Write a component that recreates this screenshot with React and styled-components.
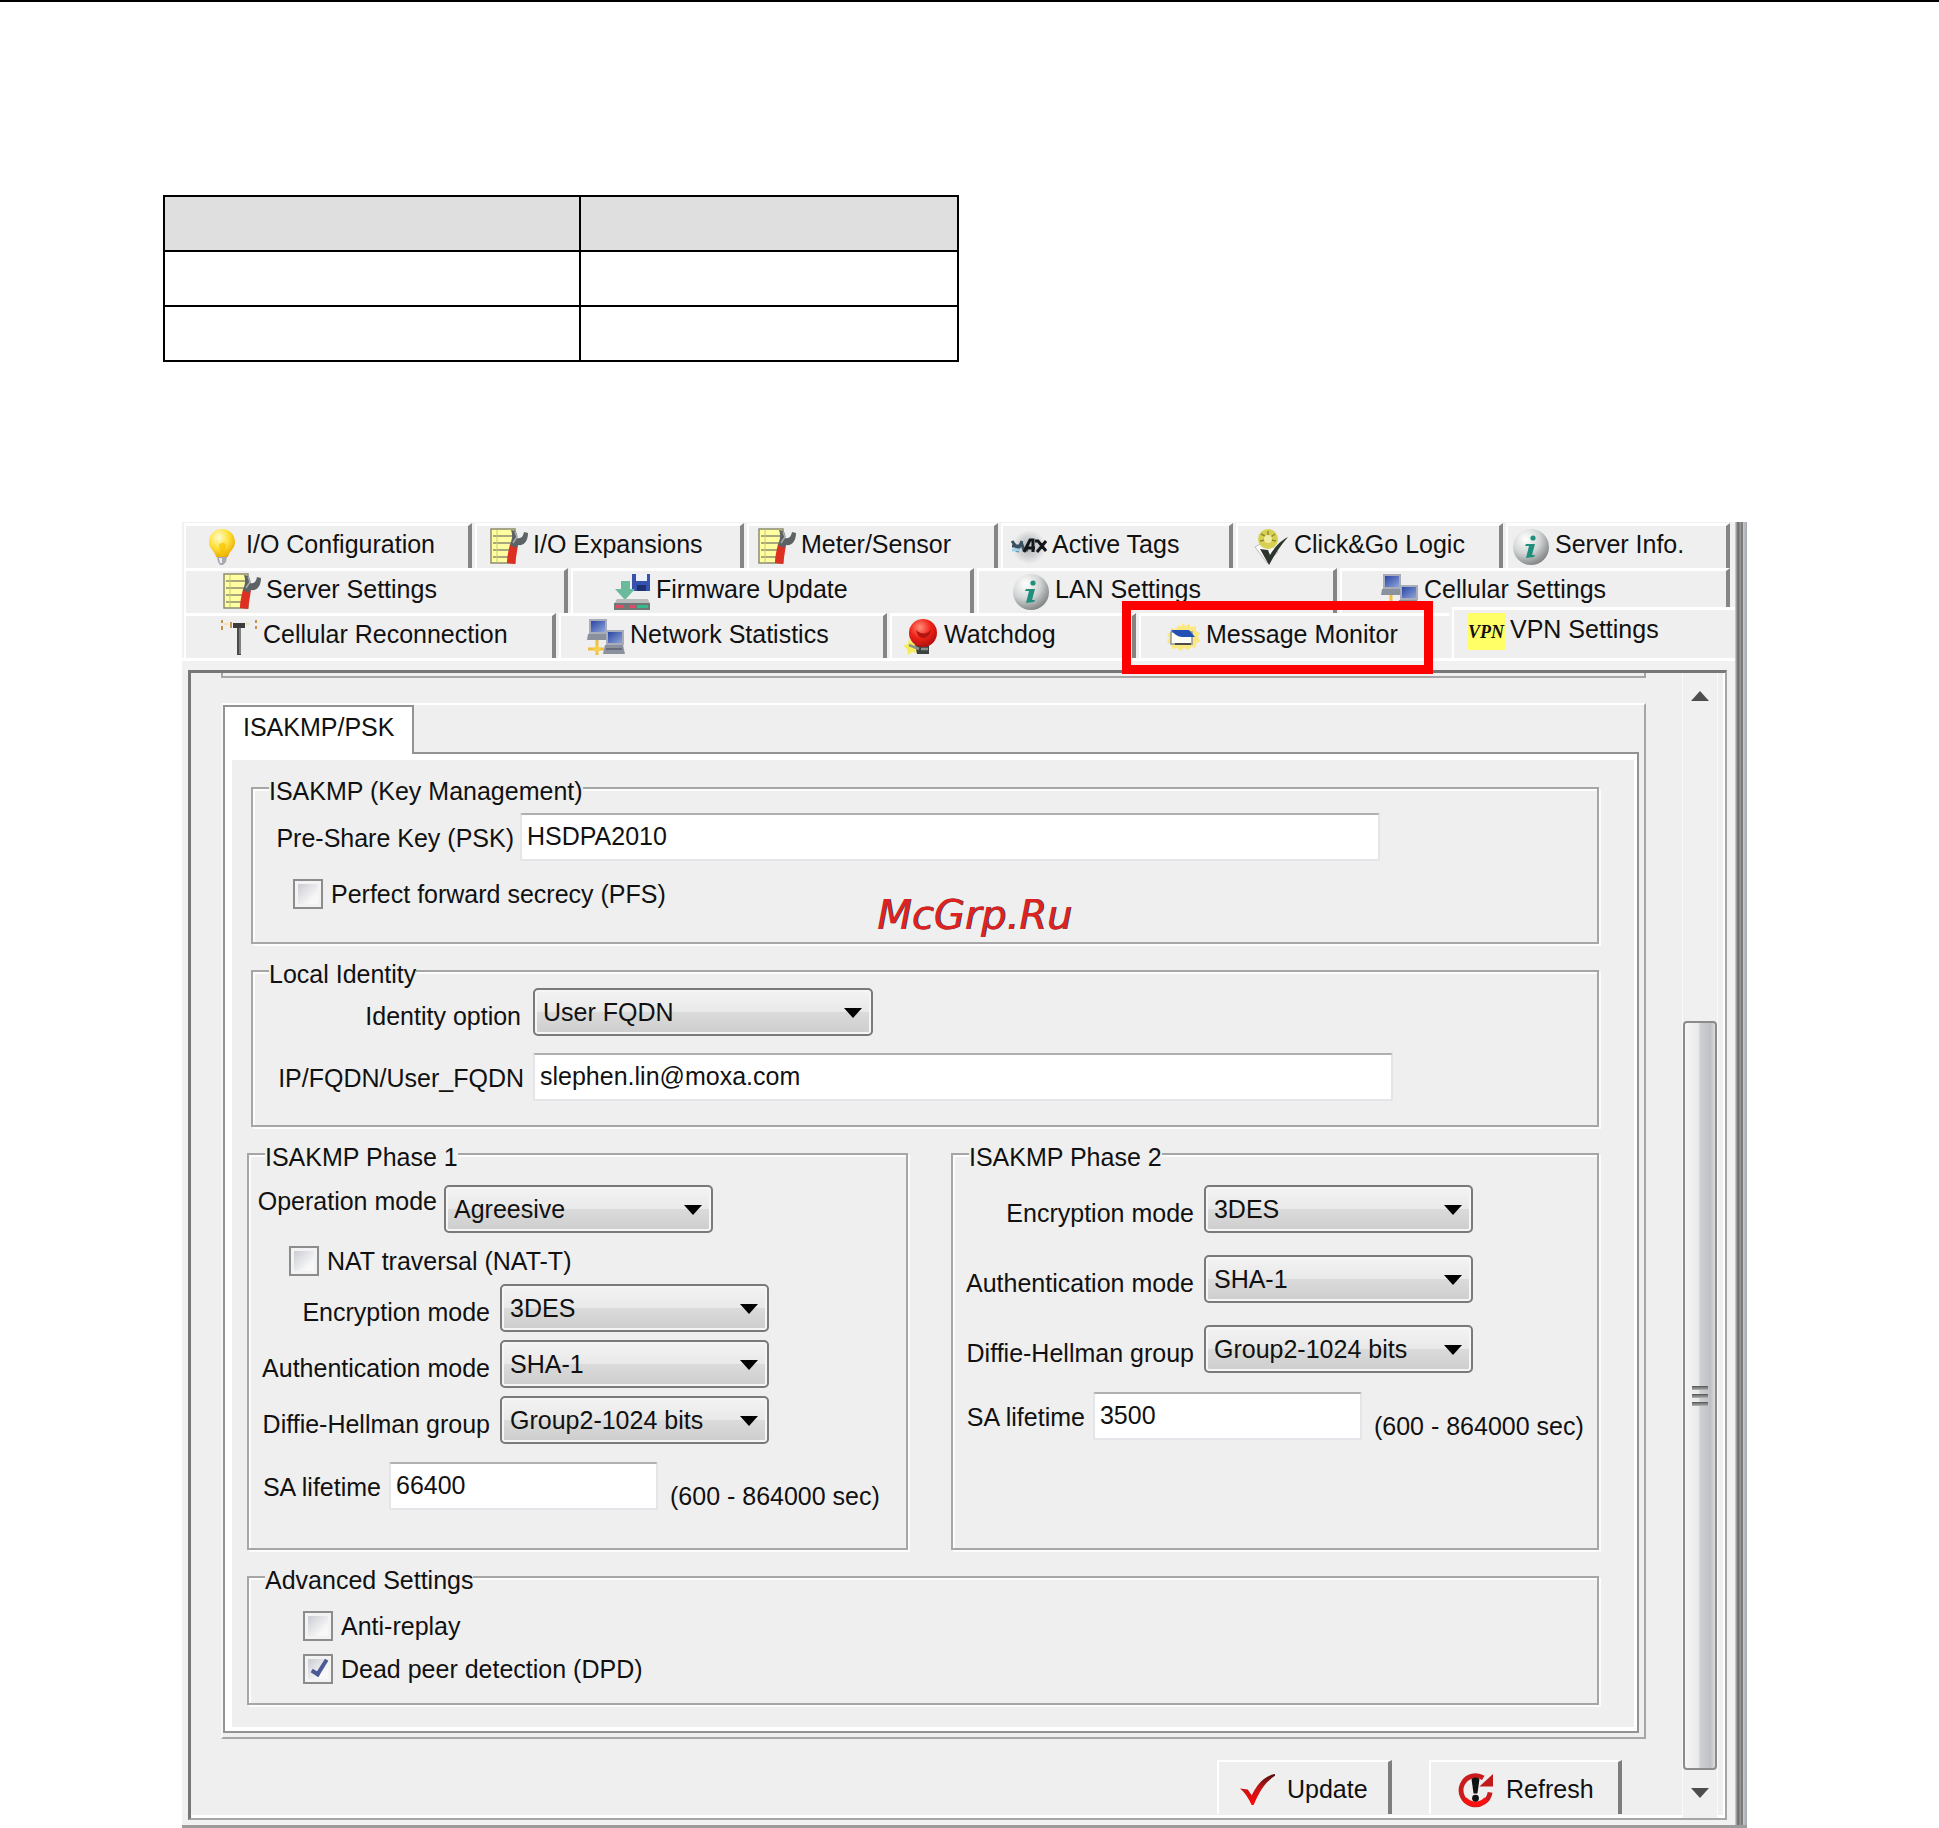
import React, { useId, useState } from 'react';
import styled, { createGlobalStyle, css } from 'styled-components';

const FACE = '#efefef';
const LINE = '#a6a6a6';

const GlobalStyle = createGlobalStyle`
  *, *::before, *::after { box-sizing: border-box; }
  body { margin: 0; background: #fff; }
  body, button, input, select {
    font-family: "Liberation Sans", Arial, sans-serif;
    font-size: 25px;
    line-height: 28px;
    color: #111;
  }
`;

const Page = styled.div`
  position: relative;
  border-top: 2px solid #000;
  padding: 193px 192px 0 182px;
`;

const BlankTable = styled.table`
  width: 796px;
  max-width: 100%;
  margin: 0 0 160px -19px;
  border-collapse: collapse;
  table-layout: fixed;
  th, td { height: 55px; padding: 0; border: 2px solid #000; }
  th { background: #dfdfdf; }
  th:first-child { width: 416px; }
`;

/* ---------- window ---------- */

const Window = styled.main`
  display: flex;
  background: #f1f1f1;
  border-bottom: 3px solid #9c9c9c;
`;

const WindowBody = styled.div`
  flex: 1;
  min-width: 0;
  padding: 1px 0 5px;
`;

const WindowEdge = styled.div`
  width: 12px;
  background: linear-gradient(to right, #d8d8d8, #666 25%, #9a9a9a 45%, #666 60%, #c4c8cc 70%, #a4a8ac);
`;

const TabStrip = styled.div`
  border-bottom: 3px solid #fff;
`;

const TabRow = styled.div`
  display: grid;
  grid-template-columns: ${p => p.$spans.map(n => `minmax(0, ${n}fr)`).join(' ')};
  gap: 3px;
  padding: 0 ${p => (p.$flush ? 0 : 5)}px 0 2px;
`;

const TabButton = styled.button`
  position: relative;
  min-width: 0;
  height: 45px;
  display: flex;
  align-items: center;
  gap: 5px;
  padding: 0 0 0 ${p => p.$indent}px;
  background: ${FACE};
  border: 0 solid #fff;
  border-width: 3px 0 0 2px;
  border-right: ${p => (p.$edge ? '4px solid #858585' : '0')};
  white-space: nowrap;
  ${p => p.$selected && css`
    height: 51px;
    margin-top: -6px;
    padding-bottom: 5px;
  `}
`;

const TabText = styled.span`
  padding-bottom: 6px;
`;

const Highlight = styled.span`
  position: absolute;
  z-index: 2;
  inset: -15px 16px -16px -19px;
  border: 9px solid #f00;
  pointer-events: none;
`;

/* ---------- panel ---------- */

const Panel = styled.section`
  display: flex;
  margin: 9px 8px 0 6px;
  background: ${FACE};
  border: 2px solid ${LINE};
  border-top: 3px solid #777;
  border-left: 3px solid #777;
  box-shadow: inset -2px -3px 0 #fff;
`;

const PanelContent = styled.div`
  flex: 1;
  min-width: 0;
  padding: 0 36px 4px 30px;
`;

const GroupTail = styled.div`
  height: 5px;
  margin-bottom: 25px;
  border: 2px solid ${LINE};
  border-top: 0;
`;

const TabControl = styled.div`
  padding: 0 5px 4px 0;
  border: 2px solid ${LINE};
  border-top-color: #fff;
  border-left-color: #f6f6f6;
`;

const InnerTab = styled.button`
  display: block;
  position: relative;
  height: 49px;
  margin-bottom: -2px;
  padding: 0 18px 7px 18px;
  background: #fff;
  border: 2px solid #939393;
  border-bottom: 0;
`;

const Pane = styled.div`
  padding: 6px 3px 4px 7px;
  background: #fff;
  border: 2px solid #939393;
`;

const PaneBody = styled.div`
  display: flex;
  flex-direction: column;
  gap: 10px;
  padding: 11px 35px 22px 15px;
  background: ${FACE};
`;

const Columns = styled.div`
  display: flex;
  gap: 43px;
`;

const Group = styled.fieldset`
  flex: ${p => p.$span || 'none'};
  min-width: 0;
  margin: 0 0 0 ${p => p.$inset || 0}px;
  padding: ${p => p.$pad};
  border: 2px solid ${LINE};
  box-shadow: inset 2px 2px 0 #fcfcfc, 2px 2px 0 #fcfcfc;
`;

const Legend = styled.legend`
  margin-left: 16px;
  padding: 6px 0 0;
  background: ${FACE};
`;

const Stack = styled.div`
  display: flex;
  flex-direction: column;
  gap: ${p => p.$gap}px;
  margin-bottom: ${p => p.$after || 0}px;
`;

const Row = styled.div`
  display: flex;
  align-items: ${p => (p.$raised ? 'flex-start' : 'center')};
  gap: ${p => p.$gap || 8}px;
`;

const Label = styled.label`
  flex: none;
  width: ${p => p.$width}px;
  padding-top: ${p => (p.$drop ? 8 : 2)}px;
  text-align: right;
  white-space: nowrap;
`;

const TextBox = styled.input`
  flex: 0 1 ${p => p.$width}px;
  min-width: 0;
  height: 48px;
  padding: 0 5px 1px;
  background: #fff;
  border: 2px solid #e4e5e9;
  border-top-color: #b0b0b0;
  border-radius: 2px;
  outline: 0;
`;

const Hint = styled.span`
  padding: 20px 0 0 4px;
  white-space: nowrap;
`;

const SelectFrame = styled.span`
  position: relative;
  flex: 0 1 ${p => p.$width}px;
  min-width: 0;
  &::after {
    content: '';
    position: absolute;
    right: 11px;
    top: 20px;
    border: 9px solid transparent;
    border-top: 10px solid #000;
    border-bottom: 0;
    pointer-events: none;
  }
`;

const SelectBox = styled.select`
  display: block;
  width: 100%;
  height: 48px;
  padding: 0 30px 0 8px;
  appearance: none;
  background: linear-gradient(#f3f3f3, #e9e9e9 50%, #dbdbdb 50%, #cdcdcd);
  border: 2px solid #7a7a7a;
  border-radius: 5px;
  box-shadow: inset 0 0 0 2px #f6f6f6;
  outline: 0;
`;

const CheckLabel = styled.label`
  display: flex;
  align-items: center;
  gap: 8px;
  height: 30px;
  padding-left: ${p => p.$indent}px;
`;

const CheckBox = styled.input`
  appearance: none;
  flex: none;
  width: 30px;
  height: 30px;
  margin: 0;
  display: grid;
  place-items: center;
  border: 2px solid #8c8c8c;
  background: linear-gradient(135deg, #c9ccd2, #f8f8f8 75%) content-box, #f3f3f3;
  padding: 3px;
  &:checked::after {
    content: '';
    width: 9px;
    height: 19px;
    margin: -6px 0 0 3px;
    border: solid #4a5a96;
    border-width: 0 4px 4px 0;
    transform: rotate(32deg);
  }
`;

const Actions = styled.div`
  display: flex;
  justify-content: flex-end;
  gap: 37px;
  padding: 21px 24px 0 0;
`;

const ActionButton = styled.button`
  display: flex;
  align-items: center;
  gap: ${p => p.$gap}px;
  width: ${p => p.$width}px;
  height: 54px;
  padding: 2px 0 0 ${p => p.$indent}px;
  background: ${FACE};
  border: 2px solid #fff;
  border-bottom: 0;
  border-right: 4px solid #7e7e7e;
`;

/* ---------- scroll bar ---------- */

const ScrollTrack = styled.div`
  width: 36px;
  margin-right: 7px;
  display: flex;
  flex-direction: column;
  align-items: center;
  padding-bottom: 3px;
  background: #f0f0f0;
  border-left: 1px solid #fafafa;
  border-right: 1px solid #fafafa;
`;

const ScrollArrow = styled.button`
  flex: none;
  display: grid;
  place-items: center;
  width: 100%;
  height: 45px;
  padding: 0;
  border: 0;
  background: none;
`;

const ScrollSpace = styled.div`
  flex: 304 0 0;
`;

const ScrollThumb = styled.div`
  flex: 746 0 0;
  width: 34px;
  display: flex;
  flex-direction: column;
  align-items: center;
  justify-content: center;
  gap: 4px;
  background: linear-gradient(to right, #f6f6f6, #e9e9ea 45%, #cfd0d3 50%, #bfc0c4 85%, #dcdcde);
  border: 2px solid #8b8b8b;
  border-radius: 4px;
`;

const GripLine = styled.span`
  width: 16px;
  height: 4px;
  background: linear-gradient(#555, #b4b4b4);
`;

const Watermark = styled.div`
  position: absolute;
  inset: 0 0 0 10px;
  display: flex;
  align-items: center;
  justify-content: center;
  font: italic 40px/48px "DejaVu Sans", Verdana, sans-serif;
  color: #dd2222;
  text-shadow: 1px 0 0 #3a2a3a;
  pointer-events: none;
`;

/* ---------- icons ---------- */

const Glyph = styled.svg`
  flex: none;
  display: block;
`;

const VpnMark = styled.span`
  flex: none;
  display: grid;
  place-items: center;
  width: 38px;
  height: 37px;
  overflow: hidden;
  background: #ffff66;
  font: italic bold 18px/20px "Liberation Serif", serif;
`;

const Icon = ({ children, size = 38 }) => (
  <Glyph width={size} height={size} viewBox="0 0 38 38" aria-hidden="true">{children}</Glyph>
);

const Bulb = () => (
  <Icon>
    <defs>
      <radialGradient id="bulb" cx=".38" cy=".3" r=".75">
        <stop offset="0" stopColor="#fffbd0" /><stop offset=".5" stopColor="#ffe23c" /><stop offset="1" stopColor="#e8a800" />
      </radialGradient>
    </defs>
    <path d="M19 1C11 1 6 7 6 14c0 7 6 9 7 15h12c1-6 7-8 7-15C32 7 27 1 19 1z" fill="url(#bulb)" />
    <path d="M16 17c2-3 5-3 7 0l-2 11h-3z" fill="#f4c400" opacity=".7" />
    <path d="M14 29h10l-1 5-3 3h-3l-2-3z" fill="#a9a9b4" />
    <path d="M16 30h3v5h-2z" fill="#eee" />
  </Icon>
);

const Sheet = () => (
  <Icon>
    <path d="M1 1h24v34H1z" fill="#ffffa0" stroke="#8c8c70" strokeWidth="1.5" />
    <path d="M3 8h20M3 15h20M3 22h20M3 29h20" stroke="#8c8c70" strokeWidth="1.5" />
    <path d="M7 2v32" stroke="#c8c878" />
    <path d="M20 16l8 1-3 19-8-1c0-6 1-10 3-19z" fill="#dd2f22" />
    <path d="M21 2c5 0 7 4 6 8 4 1 6-1 7-6l4 1c0 8-4 13-10 12l-2 3-6-3c2-6 3-9 1-15z" fill="#5d6264" />
    <path d="M25 4l2 5-4 6" fill="none" stroke="#a5abab" strokeWidth="1.5" />
  </Icon>
);

const Tags = () => (
  <Icon>
    <defs>
      <radialGradient id="tagball">
        <stop offset="0" stopColor="#b4b8bb" /><stop offset=".6" stopColor="#d0d2d4" /><stop offset="1" stopColor="#efefef" />
      </radialGradient>
    </defs>
    <circle cx="20" cy="19" r="17" fill="url(#tagball)" />
    <path d="M3 13l5 7M3 18h8M8 24l5-11M12 14l3 8h4" fill="none" stroke="#395160" strokeWidth="3" />
    <path d="M15 24l6-12h3v12M18 20h8M26 13h3l8 10M37 13l-9 11" fill="none" stroke="#15181a" strokeWidth="3" />
    <path d="M3 22h8" stroke="#9fd4ec" strokeWidth="3" />
  </Icon>
);

const ClickGo = () => (
  <Icon>
    <path d="M4 19l12-7 11 12-11 11z" fill="#fafafa" stroke="#bdbdbd" />
    <circle cx="17" cy="11" r="10" fill="#d7d050" />
    <path d="M10 6l4 2M17 3v4M24 6l-4 3M9 13l5-1M25 13l-5-1" stroke="#8d8a34" strokeWidth="1.5" />
    <circle cx="17" cy="11" r="4" fill="#f1eda0" />
    <path d="M9 21l8 1 2 5C24 19 29 13 37 9 30 17 24 26 18 37z" fill="#2c352c" />
  </Icon>
);

const Info = () => (
  <Icon>
    <defs>
      <radialGradient id="infoball" cx=".35" cy=".28" r=".8">
        <stop offset="0" stopColor="#fff" /><stop offset=".5" stopColor="#d3d6d6" /><stop offset="1" stopColor="#74797a" />
      </radialGradient>
    </defs>
    <circle cx="19" cy="19" r="18" fill="url(#infoball)" />
    <circle cx="21" cy="10" r="2.6" fill="#1f8f7c" />
    <path d="M14 16h9l-3 11h3l-1 2-8 1 3-12h-4z" fill="#1f8f7c" />
  </Icon>
);

const Firmware = () => (
  <Icon>
    <path d="M19 1h18v17H21l-2-2z" fill="#3553ae" />
    <path d="M23 1h11v7H23z" fill="#eef1fb" />
    <path d="M24 12h9v6h-9z" fill="#1d3170" />
    <path d="M8 8h9v8h5L12 27 2 16h6z" fill="#6abb9c" />
    <path d="M4 26h31l2 5H1z" fill="#b9bcbc" />
    <path d="M1 30h36v7H1z" fill="#6f7777" />
    <path d="M3 32h8v3H3zM17 32h5v3h-5z" fill="#de4b64" />
    <path d="M24 32h11v3H24z" fill="#35b98c" />
  </Icon>
);

const Computers = () => (
  <Icon>
    <defs>
      <linearGradient id="screen" x1="0" y1="0" x2="1" y2="1">
        <stop offset="0" stopColor="#2a46a4" /><stop offset="1" stopColor="#8ea4d8" />
      </linearGradient>
    </defs>
    <path d="M10 20v17M1 31h16" stroke="#f0bf40" strokeWidth="3" />
    <path d="M6 31l4-4 4 4-4 4z" fill="#f6d04a" />
    <path d="M2 1h18v15H2z" fill="#a9adba" />
    <path d="M4 3h14v11H4z" fill="url(#screen)" />
    <path d="M1 16h18l2 6H0z" fill="#8c919e" />
    <path d="M19 12h18v15H19z" fill="#a9adba" />
    <path d="M21 14h14v11H21z" fill="url(#screen)" />
    <path d="M18 27h18l2 9H16z" fill="#8c919e" />
    <path d="M19 31h16" stroke="#666c7c" strokeWidth="2" />
  </Icon>
);

const Antenna = () => (
  <Icon>
    <path d="M19 6v31" stroke="#4a4a4a" strokeWidth="4" />
    <path d="M20 9v27" stroke="#b5b5b5" />
    <path d="M13 5h12v5H13z" fill="#3c3c3c" />
    <path d="M2 2v3M2 8v4M11 4v6" stroke="#c4924c" strokeWidth="2" />
    <path d="M3 6h6M26 6h4" stroke="#f5e3b8" strokeWidth="2" />
    <path d="M36 2v3M36 8v3" stroke="#c4924c" strokeWidth="2" />
  </Icon>
);

const Alarm = () => (
  <Icon>
    <defs>
      <radialGradient id="alarm" cx=".4" cy=".3" r=".75">
        <stop offset="0" stopColor="#ff8e7a" /><stop offset=".5" stopColor="#f02218" /><stop offset="1" stopColor="#a80f0c" />
      </radialGradient>
    </defs>
    <path d="M8 20l3 5 6-1-3 5 3 6-6-1-4 3-1-6-4-3 5-2z" fill="#f7ec5c" />
    <path d="M14 26h14v10H16z" fill="#3d4240" />
    <path d="M8 27l10 4M20 31h7" stroke="#8d938a" strokeWidth="2.5" />
    <circle cx="22" cy="15" r="14" fill="url(#alarm)" />
    <path d="M15 12c4 4 10 5 15 0-1 6-5 8-8 8s-6-3-7-8z" fill="#b31410" />
  </Icon>
);

const Mail = () => (
  <Icon>
    <path d="M19 5l3 3 4-2 2 3 5-1v5l4 2-2 4 2 4-4 3v4l-5-1-3 3-4-2-4 3-3-3-5 1-1-4-4-3 2-4-2-4 4-2v-4l5 1 2-4 4 2z" fill="#fbe880" />
    <path d="M8 14h21v12H8z" fill="#fdfdf4" stroke="#8d97a4" strokeWidth="1.5" />
    <path d="M8 12h18l6 7H19c-4 0-8-3-11-7z" fill="#2450b4" />
    <path d="M12 26h16" stroke="#4b4b4b" strokeWidth="2" />
  </Icon>
);

const RedCheck = () => (
  <Icon size={37}>
    <defs>
      <linearGradient id="redcheck" x1="0" y1="0" x2="0" y2="1">
        <stop offset="0" stopColor="#4a0d0d" /><stop offset=".45" stopColor="#c31616" /><stop offset="1" stopColor="#ff0808" />
      </linearGradient>
    </defs>
    <path d="M1 18l8 1 4 6C19 13 26 5 37 3v2C27 11 21 21 15 35h-2C10 28 6 22 1 18z" fill="url(#redcheck)" />
  </Icon>
);

const RefreshMark = () => (
  <Icon size={37}>
    <path d="M27 7a15 15 0 1 0 7 15" fill="none" stroke="#c91c1c" strokeWidth="5" />
    <path d="M8 29a15 15 0 0 0 22 0" fill="none" stroke="#ff1010" strokeWidth="5" />
    <path d="M37 3v13H23z" fill="#c11a1a" />
    <path d="M15 9c0-3 8-3 8 0l-2 14h-4z" fill="#111" />
    <circle cx="19" cy="28" r="3.5" fill="#111" />
  </Icon>
);

/* ---------- composed parts ---------- */

const VpnIcon = () => <VpnMark aria-hidden="true">VPN</VpnMark>;

const TAB_ROWS = [
  [
    { text: 'I/O Configuration', icon: Bulb, span: 288, indent: 17 },
    { text: 'I/O Expansions', icon: Sheet, span: 269, indent: 13 },
    { text: 'Meter/Sensor', icon: Sheet, span: 251, indent: 9 },
    { text: 'Active Tags', icon: Tags, span: 232, indent: 6 },
    { text: 'Click&Go Logic', icon: ClickGo, span: 267, indent: 13 },
    { text: 'Server Info.', icon: Info, span: 224, indent: 4 },
  ],
  [
    { text: 'Server Settings', icon: Sheet, span: 384, indent: 37 },
    { text: 'Firmware Update', icon: Firmware, span: 403, indent: 40 },
    { text: 'LAN Settings', icon: Info, span: 360, indent: 33 },
    { text: 'Cellular Settings', icon: Computers, span: 390, indent: 39 },
  ],
  [
    { text: 'Cellular Reconnection', icon: Antenna, span: 372, indent: 34 },
    { text: 'Network Statistics', icon: Computers, span: 328, indent: 26 },
    { text: 'Watchdog', icon: Alarm, span: 246, indent: 9 },
    { text: 'Message Monitor', icon: Mail, span: 310, indent: 22, highlight: true },
    { text: 'VPN Settings', icon: VpnIcon, span: 283, indent: 13, selected: true },
  ],
];

function Tab({ text, icon: Mark, indent, highlight, selected }) {
  return (
    <TabButton
      type="button"
      role="tab"
      aria-selected={!!selected}
      $indent={indent}
      $edge={!highlight && !selected}
      $selected={selected}
    >
      <Mark />
      <TabText>{text}</TabText>
      {highlight && <Highlight />}
    </TabButton>
  );
}

function SelectRow({ label, value, width, labelWidth, gap, raised }) {
  const id = useId();
  return (
    <Row $gap={gap} $raised={raised}>
      <Label htmlFor={id} $width={labelWidth} $drop={!raised}>{label}</Label>
      <SelectFrame $width={width}>
        <SelectBox id={id} defaultValue={value}>
          <option>{value}</option>
        </SelectBox>
      </SelectFrame>
    </Row>
  );
}

function TextRow({ label, value, width, labelWidth, gap, hint }) {
  const id = useId();
  return (
    <Row $gap={gap}>
      <Label htmlFor={id} $width={labelWidth}>{label}</Label>
      <TextBox id={id} type="text" defaultValue={value} $width={width} />
      {hint && <Hint>{hint}</Hint>}
    </Row>
  );
}

function CheckRow({ label, indent, checked = false }) {
  const [on, setOn] = useState(checked);
  return (
    <CheckLabel $indent={indent}>
      <CheckBox type="checkbox" checked={on} onChange={e => setOn(e.target.checked)} />
      {label}
    </CheckLabel>
  );
}

export default function App() {
  return (
    <Page>
      <GlobalStyle />
      <BlankTable>
        <thead><tr><th /><th /></tr></thead>
        <tbody>
          <tr><td /><td /></tr>
          <tr><td /><td /></tr>
        </tbody>
      </BlankTable>

      <Window>
        <WindowBody>
          <TabStrip role="tablist">
            {TAB_ROWS.map((row, i) => (
              <TabRow key={i} $spans={row.map(tab => tab.span)} $flush={i === 2}>
                {row.map(tab => <Tab key={tab.text} {...tab} />)}
              </TabRow>
            ))}
          </TabStrip>

          <Panel>
            <PanelContent>
              <GroupTail />
              <TabControl>
                <InnerTab type="button">ISAKMP/PSK</InnerTab>
                <Pane>
                  <PaneBody>
                    <Group $inset={4} $pad="8px 0 33px">
                      <Legend>ISAKMP (Key Management)</Legend>
                      <Stack $gap={18}>
                        <TextRow label="Pre-Share Key (PSK)" value="HSDPA2010" labelWidth={261} gap={6} width={860} />
                        <CheckRow label="Perfect forward secrecy (PFS)" indent={40} />
                      </Stack>
                    </Group>

                    <Group $inset={4} $pad="0 0 24px">
                      <Legend>Local Identity</Legend>
                      <Stack $gap={17}>
                        <SelectRow label="Identity option" value="User FQDN" labelWidth={268} gap={12} width={340} />
                        <TextRow label="IP/FQDN/User_FQDN" value="slephen.lin@moxa.com" labelWidth={271} gap={9} width={860} />
                      </Stack>
                    </Group>

                    <Columns>
                      <Group $span="661 1 0" $pad="14px 0 38px">
                        <Legend>ISAKMP Phase 1</Legend>
                        <Stack $gap={13} $after={8}>
                          <SelectRow label="Operation mode" value="Agreesive" labelWidth={188} gap={7} width={269} raised />
                          <CheckRow label="NAT traversal (NAT-T)" indent={40} />
                        </Stack>
                        <Stack $gap={8} $after={18}>
                          <SelectRow label="Encryption mode" value="3DES" labelWidth={241} gap={10} width={269} />
                          <SelectRow label="Authentication mode" value="SHA-1" labelWidth={241} gap={10} width={269} />
                          <SelectRow label="Diffie-Hellman group" value="Group2-1024 bits" labelWidth={241} gap={10} width={269} />
                        </Stack>
                        <TextRow label="SA lifetime" value="66400" labelWidth={132} width={269} hint="(600 - 864000 sec)" />
                      </Group>

                      <Group $span="648 1 0" $pad="14px 0 38px">
                        <Legend>ISAKMP Phase 2</Legend>
                        <Stack $gap={22} $after={19}>
                          <SelectRow label="Encryption mode" value="3DES" labelWidth={241} gap={10} width={269} />
                          <SelectRow label="Authentication mode" value="SHA-1" labelWidth={241} gap={10} width={269} />
                          <SelectRow label="Diffie-Hellman group" value="Group2-1024 bits" labelWidth={241} gap={10} width={269} />
                        </Stack>
                        <TextRow label="SA lifetime" value="3500" labelWidth={132} width={269} hint="(600 - 864000 sec)" />
                      </Group>
                    </Columns>

                    <Group $pad="17px 0 19px">
                      <Legend>Advanced Settings</Legend>
                      <Stack $gap={13}>
                        <CheckRow label="Anti-replay" indent={54} />
                        <CheckRow label="Dead peer detection (DPD)" indent={54} checked />
                      </Stack>
                    </Group>
                  </PaneBody>
                </Pane>
              </TabControl>

              <Actions>
                <ActionButton type="button" $width={175} $indent={20} $gap={11}>
                  <RedCheck />
                  Update
                </ActionButton>
                <ActionButton type="button" $width={193} $indent={26} $gap={12}>
                  <RefreshMark />
                  Refresh
                </ActionButton>
              </Actions>
            </PanelContent>

            <ScrollTrack>
              <ScrollArrow type="button" aria-label="Scroll up">
                <Glyph width="18" height="10" viewBox="0 0 18 10"><path d="M9 0l9 10H0z" fill="#4d4d4d" /></Glyph>
              </ScrollArrow>
              <ScrollSpace />
              <ScrollThumb><GripLine /><GripLine /><GripLine /></ScrollThumb>
              <ScrollArrow type="button" aria-label="Scroll down">
                <Glyph width="18" height="10" viewBox="0 0 18 10"><path d="M0 0h18L9 10z" fill="#4d4d4d" /></Glyph>
              </ScrollArrow>
            </ScrollTrack>
          </Panel>
        </WindowBody>
        <WindowEdge />
      </Window>

      <Watermark>McGrp.Ru</Watermark>
    </Page>
  );
}
